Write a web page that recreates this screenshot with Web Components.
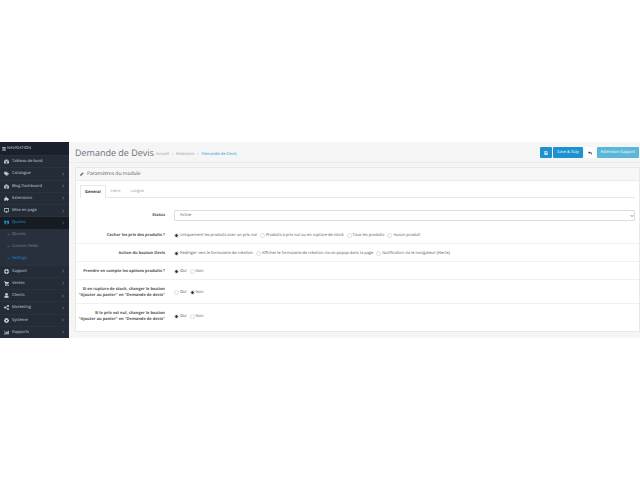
<!DOCTYPE html>
<html lang="fr">
<head>
<meta charset="utf-8">
<title>Demande de Devis</title>
<style>
  body {
    margin: 0;
    min-height: 100vh;
    display: flex;
    align-items: center;
    background: #fff;
    color: #555;
    font: 4px/6px "Open Sans", "Noto Sans", sans-serif;
    text-rendering: geometricPrecision;
  }
</style>
</head>
<body>
<admin-page>
  <side-nav slot="nav"></side-nav>
  <page-header heading="Demande de Devis">
    <action-button variant="primary" icon="save" label="Enregistrer"></action-button>
    <action-button variant="primary">Save &amp; Stay</action-button>
    <action-button variant="plain" icon="reply" label="Retour"></action-button>
    <action-button variant="info">Extension Support</action-button>
  </page-header>
  <settings-panel heading="Paramètres du module">
    <select-row label="Status" options="Activé|Désactivé"></select-row>
    <radio-row label="Cacher les prix des produits ?" checked="0" options="Uniquement les produits avec un prix nul|Produits à prix nul ou en rupture de stock|Tous les produits|Aucun produit"></radio-row>
    <radio-row label="Action du bouton Devis" checked="0" options="Rediriger vers le formulaire de création|Afficher le formulaire de création via un popup dans la page|Notification via le navigateur (Alerte)"></radio-row>
    <radio-row label="Prendre en compte les options produits ?" checked="0" options="Oui|Non"></radio-row>
    <radio-row label="Si en rupture de stock, changer le bouton&#10;&quot;Ajouter au panier&quot; en &quot;Demande de devis&quot;" checked="1" options="Oui|Non"></radio-row>
    <radio-row label="Si le prix est nul, changer le bouton&#10;&quot;Ajouter au panier&quot; en &quot;Demande de devis&quot;" checked="0" options="Oui|Non"></radio-row>
  </settings-panel>
</admin-page>

<script>
const ICONS = {
  bars: '<path d="M1 1h14v3H1zM1 6h14v3H1zM1 11h14v3H1z"/>',
  dashboard: '<path fill-rule="evenodd" d="M8 2a8 8 0 0 0-7 12h14A8 8 0 0 0 8 2zM3 8h2v2H3zm2-3h2v2H5zm6 0h2v2h-2zm0 3h2v2h-2zM8 5l1 5a2 2 0 1 1-2 0z"/>',
  tags: '<path fill-rule="evenodd" d="M0 2h6l7 7-5 6-8-7zM3 4a1 1 0 1 0 .1 0zM8 2h2l6 7-5 6-1-1 4-5z"/>',
  puzzle: '<path d="M1 6h4c-2-6 5-6 4 0h4v3c4-1 4 4 0 4v2H9c1-4-4-4-3 0H1z"/>',
  desktop: '<path fill-rule="evenodd" d="M0 1h16v11h-6v2h2v1H4v-1h2v-2H0zM2 3v7h12V3z"/>',
  quote: '<path d="M0 2h7v6c0 4-2 6-6 6v-3c2 0 3-1 3-3H0zM9 2h7v6c0 4-2 6-6 6v-3c2 0 3-1 3-3H9z"/>',
  support: '<path fill-rule="evenodd" d="M8 0a8 8 0 1 0 .1 0zM8 5a3 3 0 1 1-.1 0zM6 2l4 0-1 2H7zM2 6l2 1v2l-2 1zM14 6v4l-2-1V7zM6 14l1-2h2l1 2z"/>',
  cart: '<path d="M0 1h4l1 2h11l-2 6H6v1h8v2H4L3 3H0z"/><circle cx="6" cy="14" r="2"/><circle cx="13" cy="14" r="2"/>',
  user: '<circle cx="8" cy="4" r="4"/><path d="M1 15c0-5 2-7 4-7 2 2 4 2 6 0 2 0 4 2 4 7z"/>',
  share: '<path d="M3 8l10-5M3 8l10 5" stroke="currentColor" stroke-width="2"/><circle cx="3" cy="8" r="3"/><circle cx="13" cy="3" r="3"/><circle cx="13" cy="13" r="3"/>',
  cog: '<path fill-rule="evenodd" d="M6 0h4v3l2-2 3 3-2 2h3v4h-3l2 2-3 3-2-2v3H6v-3l-2 2-3-3 2-2H0V6h3L1 4l3-3 2 2zM8 5.500a2.500 2.500 0 1 0 .1 0z"/>',
  chart: '<path d="M0 1h1v13h15v1H0zM3 8h2v5H3zM6 4h2v9H6zM9 6h2v7H9zM12 2h3v11h-3z"/>',
  right: '<path d="M5 2l6 6-6 6" fill="none" stroke="currentColor" stroke-width="2"/>',
  doubleright: '<path d="M3 3l5 5-5 5M8 3l5 5-5 5" fill="none" stroke="currentColor" stroke-width="2"/>',
  down: '<path d="M3 5l5 5 5-5" fill="none" stroke="currentColor" stroke-width="3"/>',
  pencil: '<path d="M11 1l4 4-2 2-4-4zM8 4l4 4-7 7H1v-4z"/>',
  save: '<path fill-rule="evenodd" d="M1 1h11l3 3v11H1zM3 3v10h1V9h8v4h1V5l-2-2v3H5V3zM8 3v2h2V3z"/>',
  reply: '<path d="M0 6l6-5v3c7 0 10 3 10 6 0 2-1 4-3 5 1-5-2-6-7-6v3z"/>'
};

const icon = (name) => `<svg class="icon" viewBox="0 0 16 16" fill="currentColor" aria-hidden="true">${ICONS[name]}</svg>`;

class AdminPage extends HTMLElement {
  constructor() {
    super();
    this.attachShadow({ mode: 'open' });
  }

  connectedCallback() {
    this.shadowRoot.innerHTML = `
      <style>
        :host { display: flex; flex: 1; min-width: 0; background: #f5f5f5; }
        main { flex: 1; min-width: 0; padding-bottom: 6px; }
      </style>
      <slot name="nav"></slot>
      <main><slot></slot></main>
    `;
  }
}

class SideNav extends HTMLElement {
  constructor() {
    super();
    this.attachShadow({ mode: 'open' });
  }

  get items() {
    return [
      { icon: 'dashboard', text: 'Tableau de bord', leaf: true },
      { icon: 'tags', text: 'Catalogue' },
      { icon: 'dashboard', text: 'Blog Dashboard' },
      { icon: 'puzzle', text: 'Extensions' },
      { icon: 'desktop', text: 'Mise en page' },
      { icon: 'quote', text: 'Quotes', active: true },
      { text: 'Quotes', sub: true },
      { text: 'Custom Fields', sub: true },
      { text: 'Settings', sub: true, active: true },
      { icon: 'support', text: 'Support' },
      { icon: 'cart', text: 'Ventes' },
      { icon: 'user', text: 'Clients' },
      { icon: 'share', text: 'Marketing' },
      { icon: 'cog', text: 'Système' },
      { icon: 'chart', text: 'Rapports' }
    ];
  }

  renderItem(item) {
    const classes = [item.sub ? 'sub' : 'top', item.active ? 'active' : ''].join(' ');
    return `
      <li class="${classes}">
        <a href="#">
          ${icon(item.sub ? 'doubleright' : item.icon)}
          <span>${item.text}</span>
          ${item.sub || item.leaf ? '' : icon('right')}
        </a>
      </li>
    `;
  }

  connectedCallback() {
    this.shadowRoot.innerHTML = `
      <style>
        :host {
          display: flex;
          flex-direction: column;
          flex: none;
          width: 69px;
          background: #242d37;
          color: #c4d2dd;
        }
        .title {
          display: flex;
          align-items: center;
          gap: 1px;
          height: 13px;
          padding-left: 2px;
          background: #1a212c;
          color: #d5dae0;
        }
        .title .icon { width: 4px; height: 4px; }
        ul {
          flex: 1;
          display: flex;
          flex-direction: column;
          list-style: none;
          margin: 0;
          padding: 0;
        }
        li { display: flex; flex: 0 0 12px; box-sizing: border-box; }
        .top { flex-grow: 1; border-top: 1px solid #27333d; }
        .sub { background: #29303d; color: #7b8792; }
        a {
          flex: 1;
          display: flex;
          align-items: center;
          gap: 3px;
          padding: 0 4px;
          color: inherit;
          text-decoration: none;
        }
        span { flex: 1; padding-top: 1px; }
        .icon { width: 5px; height: 5px; }
        span + .icon { width: 4px; height: 4px; color: #8395a2; }
        .sub a { padding-left: 7px; gap: 2px; }
        .sub .icon { width: 3px; height: 3px; }
        .top.active { background: #171c23; }
        .active, .active span + .icon { color: #1e91cf; }
      </style>
      <div class="title">${icon('bars')}NAVIGATION</div>
      <ul>${this.items.map((item) => this.renderItem(item)).join('')}</ul>
    `;
  }
}

class PageHeader extends HTMLElement {
  constructor() {
    super();
    this.attachShadow({ mode: 'open' });
  }

  connectedCallback() {
    this.shadowRoot.innerHTML = `
      <style>
        :host {
          display: flex;
          align-items: center;
          box-sizing: border-box;
          height: 21px;
          padding: 1px 1px 0 6px;
          border-bottom: 1px solid #ececec;
        }
        h1 { margin: 0; font-size: 9px; line-height: 12px; font-weight: 400; color: #6b717c; }
        nav { flex: 1; display: flex; gap: 3px; padding: 4px 0 0 2px; color: #999; }
        a { color: inherit; text-decoration: none; }
        a:last-child { color: #1e91cf; }
        .actions { display: flex; gap: 1px; }
      </style>
      <h1>${this.getAttribute('heading')}</h1>
      <nav aria-label="Fil d'Ariane">
        <a href="#">Accueil</a>›
        <a href="#">Extension</a>›
        <a href="#">Demande de Devis</a>
      </nav>
      <div class="actions"><slot></slot></div>
    `;
  }
}

class ActionButton extends HTMLElement {
  constructor() {
    super();
    this.attachShadow({ mode: 'open' });
  }

  connectedCallback() {
    const name = this.getAttribute('icon');
    const label = this.getAttribute('label');
    this.shadowRoot.innerHTML = `
      <style>
        :host { display: block; }
        button {
          display: flex;
          align-items: center;
          justify-content: center;
          height: 11px;
          min-width: 12px;
          padding: 1px 4px 0;
          border: 0;
          border-radius: 1px;
          background: #1e91cf;
          color: #fff;
          font: inherit;
          text-rendering: inherit;
        }
        .plain { background: #fff; color: #555; }
        .info { background: #5bb7d8; }
        .icon { width: 4px; height: 4px; }
      </style>
      <button type="button" class="${this.getAttribute('variant')}" ${label ? `aria-label="${label}"` : ''}>
        ${name ? icon(name) : '<slot></slot>'}
      </button>
    `;
  }
}

class SettingsPanel extends HTMLElement {
  constructor() {
    super();
    this.attachShadow({ mode: 'open' });
  }

  connectedCallback() {
    this.shadowRoot.innerHTML = `
      <style>
        :host {
          display: block;
          margin: 4px 0 0 6px;
          background: #fff;
          border: 1px solid #e8e8e8;
        }
        h2 {
          display: flex;
          align-items: center;
          gap: 3px;
          height: 12px;
          margin: 0;
          padding-left: 4px;
          background: #f7f7f7;
          border-bottom: 1px solid #ebebeb;
          color: #595959;
          font-size: 5px;
          font-weight: 400;
        }
        .icon { width: 4px; height: 4px; }
        .tabs {
          display: flex;
          margin: 4px 4px 0;
          border-bottom: 1px solid #e8e8e8;
        }
        button {
          height: 12px;
          padding: 1px 4px 0;
          border: 1px solid transparent;
          border-bottom: 0;
          background: none;
          color: #999;
          font: inherit;
          text-rendering: inherit;
        }
        button[aria-selected="true"] {
          height: 13px;
          margin-bottom: -1px;
          border-color: #e8e8e8;
          background: #fff;
          color: #333;
          font-weight: 700;
        }
        .rows { padding: 8px 0 4px; }
      </style>
      <h2>${icon('pencil')}${this.getAttribute('heading')}</h2>
      <div class="tabs" role="tablist">
        <button type="button" role="tab" aria-selected="true">Général</button>
        <button type="button" role="tab" aria-selected="false">Liens</button>
        <button type="button" role="tab" aria-selected="false">Langue</button>
      </div>
      <div class="rows"><slot></slot></div>
    `;
  }
}

// Shared by both kinds of row: label column on the left, control on the right
const ROW_STYLE = `
  :host {
    display: grid;
    grid-template-columns: 87px 1fr;
    column-gap: 9px;
    padding: 7px 4px 4px 2px;
  }
  .label { text-align: right; white-space: pre-line; font-weight: 700; color: #555; }
`;

class SelectRow extends HTMLElement {
  constructor() {
    super();
    this.attachShadow({ mode: 'open' });
  }

  connectedCallback() {
    const options = this.getAttribute('options').split('|');
    this.shadowRoot.innerHTML = `
      <style>
        ${ROW_STYLE}
        :host { padding-top: 4px; padding-bottom: 5px; align-items: center; }
        .label { padding-top: 1px; }
        .field { display: grid; align-items: center; }
        select, .icon { grid-area: 1 / 1; }
        select {
          appearance: none;
          width: 100%;
          height: 11px;
          margin: 0;
          padding: 0 5px;
          border: 1px solid #ddd;
          border-radius: 1px;
          background: #fff;
          color: #555;
          font: inherit;
          text-rendering: inherit;
        }
        .icon { justify-self: end; width: 4px; height: 4px; margin-right: 1px; pointer-events: none; }
      </style>
      <label class="label" for="field">${this.getAttribute('label')}</label>
      <div class="field">
        <select id="field">${options.map((text) => `<option>${text}</option>`).join('')}</select>
        ${icon('down')}
      </div>
    `;
  }
}

class RadioRow extends HTMLElement {
  constructor() {
    super();
    this.attachShadow({ mode: 'open' });
  }

  connectedCallback() {
    const options = this.getAttribute('options').split('|');
    const checked = Number(this.getAttribute('checked'));
    this.shadowRoot.innerHTML = `
      <style>
        ${ROW_STYLE}
        :host(:not(:last-child)) { border-bottom: 1px solid #f0f0f0; }
        .choices { display: flex; flex-wrap: wrap; align-items: center; gap: 3px; }
        .choices label { display: flex; align-items: start; gap: 1px; }
        input {
          appearance: none;
          box-sizing: border-box;
          width: 5px;
          height: 5px;
          margin: 0;
          border: 1px solid #ddd;
          border-radius: 50%;
          background: #fff;
          background-clip: padding-box;
        }
        input:checked { background-color: #333; }
      </style>
      <div class="label" id="label">${this.getAttribute('label')}</div>
      <div class="choices" role="radiogroup" aria-labelledby="label">
        ${options.map((text, i) => `
          <label><input type="radio" name="choice" ${i === checked ? 'checked' : ''}>${text}</label>
        `).join('')}
      </div>
    `;
  }
}

customElements.define('admin-page', AdminPage);
customElements.define('side-nav', SideNav);
customElements.define('page-header', PageHeader);
customElements.define('action-button', ActionButton);
customElements.define('settings-panel', SettingsPanel);
customElements.define('select-row', SelectRow);
customElements.define('radio-row', RadioRow);
</script>
</body>
</html>
